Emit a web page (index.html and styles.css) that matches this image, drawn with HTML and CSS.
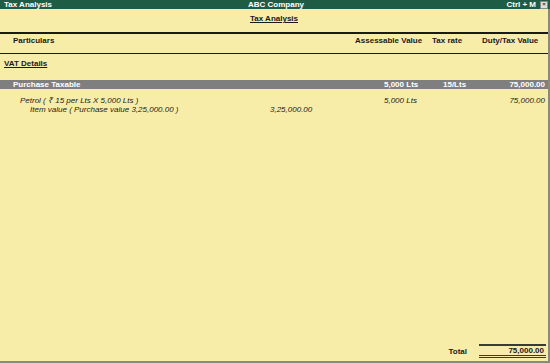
FILE: index.html
```html
<!DOCTYPE html>
<html lang="en">
<head>
    <meta charset="UTF-8">
    <title>Tax Analysis</title>
    <link rel="stylesheet" href="styles.css">
</head>
<body>
    <div class="titlebar">
        <span class="tb-left">Tax Analysis</span>
        <span class="tb-center">ABC Company</span>
        <span class="tb-right">Ctrl + M <span class="close-box">&#215;</span></span>
    </div>
    <div class="screen">
        <div class="report-title"><span>Tax Analysis</span></div>
        <div class="col-head">
            <div class="c-part">Particulars</div>
            <div class="c-ass">Assessable Value</div>
            <div class="c-rate">Tax rate</div>
            <div class="c-duty">Duty/Tax Value</div>
        </div>
        <div class="group-title"><span>VAT Details</span></div>
        <div class="row ledger">
            <div class="c-part">Purchase Taxable</div>
            <div class="c-ass">5,000 Lts</div>
            <div class="c-rate">15/Lts</div>
            <div class="c-duty">75,000.00</div>
        </div>
        <div class="row item">
            <div class="c-part">Petrol ( &#8377; 15 per Lts X 5,000 Lts )</div>
            <div class="c-ass">5,000 Lts</div>
            <div class="c-rate"></div>
            <div class="c-duty">75,000.00</div>
        </div>
        <div class="row sub">
            <div class="c-part">Item value ( Purchase value 3,25,000.00 )</div>
            <div class="c-amt">3,25,000.00</div>
        </div>
        <div class="spacer"></div>
        <div class="total-row">
            <span class="total-label">Total</span>
            <span class="total-val">75,000.00</span>
        </div>
    </div>
</body>
</html>
```

FILE: styles.css
```css
html, body {
    margin: 0;
    height: 100%;
}

body {
    font-family: "Liberation Sans", Arial, sans-serif;
    font-size: 8px;
    background: #f8eda8;
    color: #1a1a1a;
    display: flex;
    flex-direction: column;
    width: 550px;
    height: 363px;
    overflow: hidden;
    white-space: nowrap;
}

.titlebar {
    height: 9px;
    line-height: 9px;
    background: #1f5c45;
    color: #fff;
    font-weight: bold;
    display: flex;
    justify-content: space-between;
    align-items: center;
    padding: 0 2px 0 4px;
}

.tb-left, .tb-right {
    flex: 1;
}

.tb-right {
    text-align: right;
    display: flex;
    justify-content: flex-end;
    align-items: center;
    gap: 4px;
}

.close-box {
    display: inline-block;
    width: 6px;
    height: 6px;
    line-height: 5px;
    font-size: 6px;
    text-align: center;
    background: #ddd;
    color: #333;
    border: 1px solid #888;
}

.screen {
    flex: 1;
    display: flex;
    flex-direction: column;
    border-right: 2px solid #8a8a7a;
    border-bottom: 2px solid #8a8a7a;
}

.report-title {
    text-align: center;
    font-weight: bold;
    padding: 5px 0 0;
    height: 19px;
    box-sizing: border-box;
}

.report-title span {
    text-decoration: underline;
}

.col-head {
    display: grid;
    grid-template-columns: 1fr 80px 52px 78px;
    font-weight: bold;
    border-top: 2px solid #1a1a1a;
    border-bottom: 1px solid #1a1a1a;
    height: 22px;
    box-sizing: border-box;
    padding-top: 2px;
    margin-top: 4px;
}

.col-head .c-part { padding-left: 13px; }
.col-head .c-ass { padding-left: 17px; }
.col-head .c-rate { padding-left: 14px; }
.col-head .c-duty { padding-left: 12px; }

.group-title {
    font-weight: bold;
    padding: 5px 0 0 4px;
    height: 26px;
    box-sizing: border-box;
}

.group-title span {
    text-decoration: underline;
}

.row {
    display: grid;
    grid-template-columns: 1fr 80px 52px 78px;
    height: 9px;
    line-height: 9px;
}

.row .c-duty {
    text-align: right;
    padding-right: 3px;
}

.row .c-ass { padding-left: 46px; }
.row .c-rate { padding-left: 25px; }

.ledger {
    background: #7f7f7f;
    color: #fff;
    font-weight: bold;
    margin-bottom: 7px;
}

.ledger .c-part {
    padding-left: 13px;
}

.item, .sub {
    font-style: italic;
}

.item .c-part {
    padding-left: 20px;
}

.sub {
    grid-template-columns: 270px 1fr;
}

.sub .c-part {
    padding-left: 30px;
}

.spacer {
    flex: 1;
}

.total-row {
    display: flex;
    justify-content: flex-end;
    align-items: center;
    font-weight: bold;
    height: 20px;
}

.total-label {
    margin-right: 12px;
}

.total-val {
    width: 65px;
    text-align: right;
    padding-right: 2px;
    border-top: 2px solid #3a3a3a;
    border-bottom: 3px double #3a3a3a;
    line-height: 9px;
    margin-right: 2px;
}
```
